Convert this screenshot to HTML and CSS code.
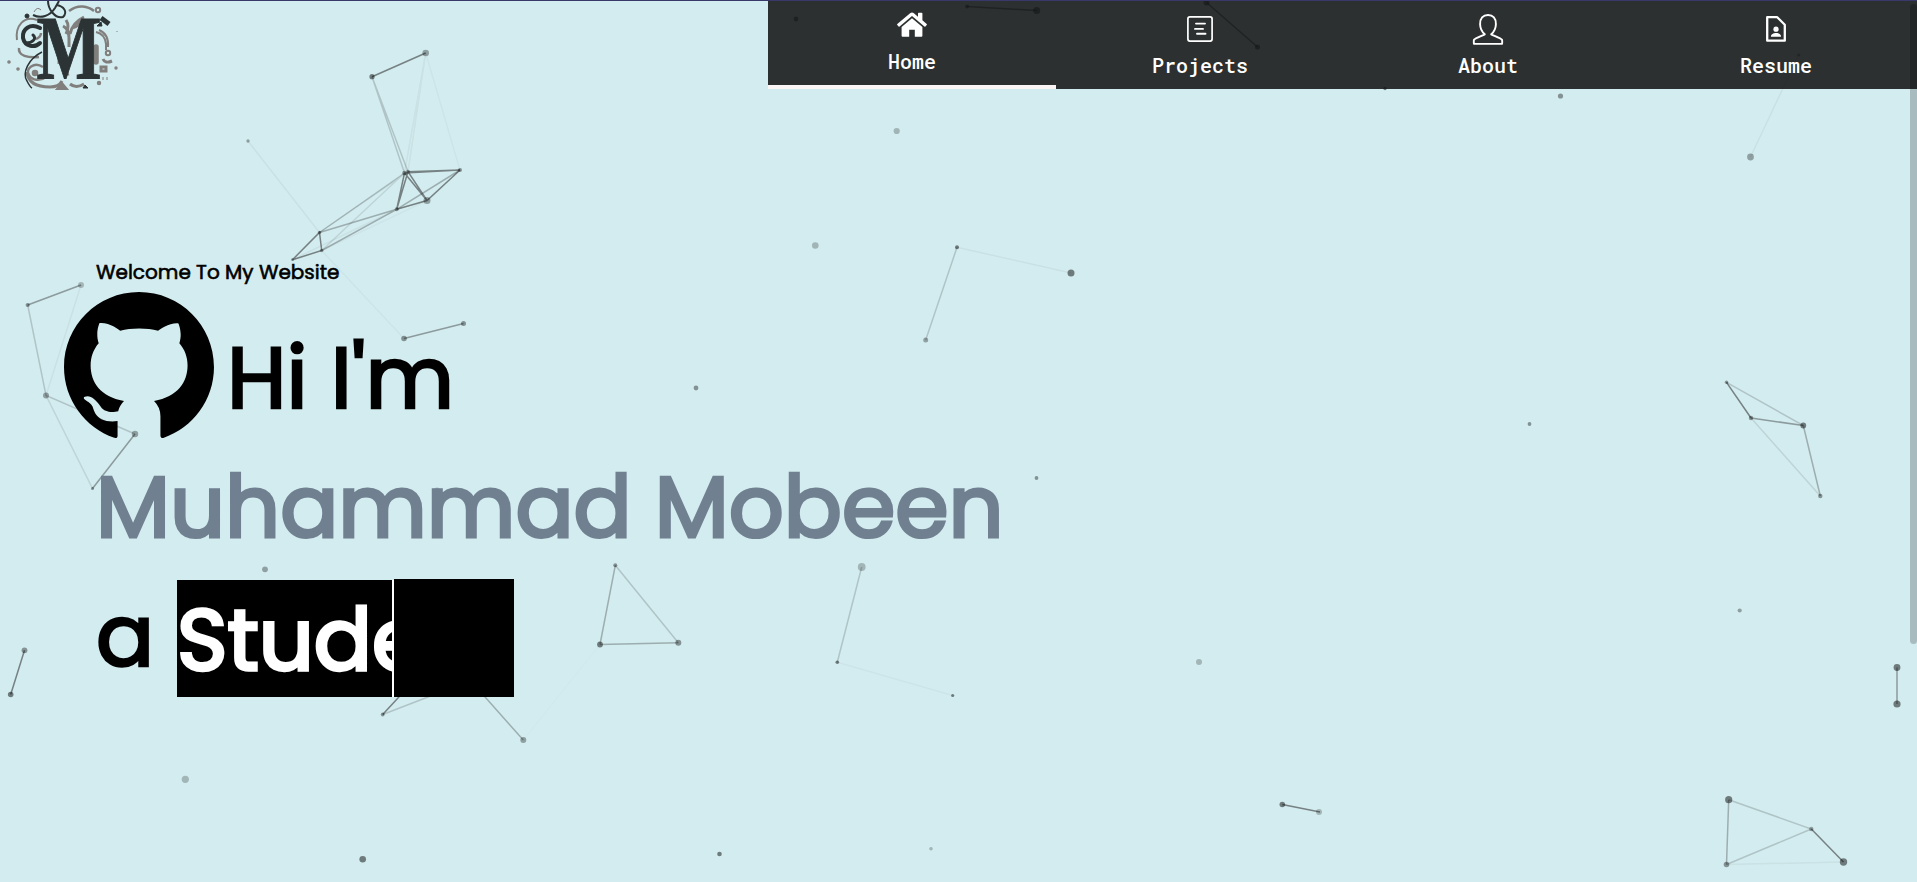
FILE: index.html
```html
<!DOCTYPE html>
<html lang="en">
<head>
<meta charset="utf-8">
<title>Muhammad Mobeen</title>
<link rel="stylesheet" href="styles.css">
</head>
<body>
<svg class="particles" viewBox="0 0 1917 882" aria-hidden="true">
  <g class="links">
    <path opacity=".55" d="M372 76.7L425.7 53M404.5 173L460 170M408 171.7L460 170M404.5 173L427 200.5M408 171.7L427 200.5M404.5 173L396.7 209.3M408 171.7L396.7 209.3M396.7 209.3L427 200.5L460 170M319.5 232.5L321.7 250.5L292.5 259.7ZM1726.5 382.3L1751 418M1811.3 829L1843.5 862M1282.3 804.5L1320 812M24.5 650.3L10.7 694.5M382.7 714.5L410 685M967 6.5L1036.7 10.5M1206.5 2.5L1257.5 47"/>
    <path opacity=".42" d="M1751 418L1803.3 425.5M1897 667.5V704M27.7 305L81 285M404 338.5L463.5 323.5M135 434L92.5 488.5"/>
    <path opacity=".32" d="M1803.3 425.5L1820.3 496M1728.7 799.7L1726.5 864.5M600 644.5L615.3 565.3M600 644.5L678.3 642.7M523.3 740L470 680M396.7 209.3L460 170M319.5 232.5L396.7 209.3L321.7 250.5"/>
    <path opacity=".2" d="M1726.5 382.3L1803.3 425.5M1728.7 799.7L1811.3 829L1726.5 864.5M615.3 565.3L678.3 642.7M861.7 567L837.3 662.3M957 247.3L925.7 340M27.7 305L46 395.5L135 434M372 76.7L404.5 173M372 76.7L408 171.7M319.5 232.5L404.5 173M382.7 714.5L441 692"/>
    <path opacity=".12" d="M1751 418L1820.3 496M46 395.5L92.5 488.5M319.5 232.5L408 171.7M321.7 250.5L404.5 173"/>
    <path opacity=".05" d="M425.7 53L404.5 173M425.7 53L408 171.7M248 141L319.5 232.5M957 247.3L1071 273M81 285L46 395.5M1750.5 157L1798.7 55M292.5 259.7L396.7 209.3M1726.5 864.5L1843.5 862"/>
    <path opacity=".03" d="M837.3 662.3L952.7 695.5M425.7 53L460 170M321.7 250.5L404 338.5M321.7 250.5L427 200.5"/>
    <path opacity=".012" d="M523.3 740L600 644.5"/>
  </g>
  <g opacity=".48">
    <circle cx="372" cy="76.7" r="2.6"/><circle cx="796" cy="19" r="2.4"/><circle cx="967" cy="6.5" r="2"/><circle cx="1036.7" cy="10.5" r="3.5"/><circle cx="1206.5" cy="2.5" r="3"/><circle cx="1257.5" cy="47" r="2.6"/><circle cx="1385" cy="88.5" r="1.7"/>
    <circle cx="957" cy="247.3" r="2"/><circle cx="1071" cy="273" r="3.5"/><circle cx="1803.3" cy="425.5" r="2.9"/><circle cx="1897" cy="667.5" r="3.4"/><circle cx="1897" cy="704" r="3.6"/><circle cx="1728.7" cy="799.7" r="3.6"/><circle cx="1843.5" cy="862" r="3.7"/>
    <circle cx="362.7" cy="859.3" r="3.3"/><circle cx="719.5" cy="854" r="2.3"/><circle cx="10.7" cy="694.5" r="2.8"/><circle cx="600" cy="644.5" r="2.9"/><circle cx="952.7" cy="695.5" r="1.6"/><circle cx="837.3" cy="662.3" r="1.8"/><circle cx="1282.3" cy="804.5" r="2.8"/>
  </g>
  <g opacity=".38">
    <circle cx="404" cy="338.5" r="2.8"/><circle cx="463.5" cy="323.5" r="2.5"/><circle cx="27.7" cy="305" r="2.1"/><circle cx="678.3" cy="642.7" r="3"/><circle cx="615.3" cy="565.3" r="2"/><circle cx="1036.5" cy="478" r="1.9"/><circle cx="1529.500" cy="424" r="1.9"/><circle cx="1560.5" cy="96" r="2.6"/>
    <circle cx="404.5" cy="173" r="2.3"/><circle cx="408" cy="171.7" r="2"/><circle cx="460" cy="170" r="2"/><circle cx="396.7" cy="209.3" r="2"/><circle cx="319.5" cy="232.5" r="1.7"/><circle cx="1751" cy="418" r="2.2"/><circle cx="1726.5" cy="382.3" r="1.7"/><circle cx="1820.3" cy="496" r="2.2"/><circle cx="1726.5" cy="864.5" r="2.8"/>
    <circle cx="24.5" cy="650.3" r="2.9"/><circle cx="696" cy="388" r="2.4"/><circle cx="382.7" cy="714.5" r="1.9"/><circle cx="92.5" cy="488.5" r="1.5"/><circle cx="292.5" cy="259.7" r="1.4"/>
  </g>
  <g opacity=".32">
    <circle cx="425.7" cy="53" r="3.3"/><circle cx="427" cy="200.5" r="3.5"/><circle cx="248" cy="141" r="1.7"/><circle cx="321.7" cy="250.5" r="1.8"/><circle cx="46" cy="395.5" r="3"/><circle cx="135" cy="434" r="3.2"/><circle cx="265" cy="569.3" r="2.9"/><circle cx="523.3" cy="740" r="3"/><circle cx="925.7" cy="340" r="2.5"/><circle cx="1750.5" cy="157" r="3.4"/><circle cx="1739.7" cy="610.5" r="2.1"/><circle cx="1811.3" cy="829" r="2.2"/><circle cx="1798.7" cy="55" r="1.6"/>
  </g>
  <g opacity=".23">
    <circle cx="81" cy="285" r="3"/><circle cx="437" cy="490.500" r="3"/><circle cx="861.7" cy="567" r="3.9"/><circle cx="896.7" cy="131" r="3.1"/><circle cx="815.3" cy="245.5" r="3.3"/><circle cx="185.3" cy="779.3" r="3.6"/><circle cx="931" cy="848.7" r="1.8"/><circle cx="1199" cy="662" r="3"/><circle cx="1319" cy="812" r="3"/>
  </g>
</svg>

<header class="header">
  <a class="logo" href="#">
    <svg viewBox="0 0 130 88" width="130" height="88">
      <g class="grey">
        <path d="M37 19C24 14 15 25 17 39"/><path stroke-width="2.500" d="M19 47C18 55 28 57 39 56"/><path stroke-width="3" d="M27 71C28 82 38 86 50 86c6 0 10-2 12-6"/><path stroke-width="2.500" d="M43 66C34 60 25 68 29 74c3 6 12 6 17 2"/>
        <path stroke-width="2.500" d="M69 10C78 3 88 5 94 10"/><path d="M66 33q4-8 0-14M70 33q2-11 14-17M63 25q6 3 6 12M72 27q8-2 8-7" stroke-width="3"/>
        <path d="M59 33v30M61 63q4 11 8 10M69 37v9" stroke-width="3"/><circle cx="98" cy="9" r="2.2"/><circle cx="35" cy="72" r="2.300" fill="#817f7d"/>
        <path d="M96 31q9 2 10 12v6M99 29q10 4 9 17"/><circle cx="108" cy="52" r="2.2"/><path stroke-width="5.500" stroke-linecap="round" d="M96 46v15"/>
        <path stroke-width="3" d="M103 58q2 5 9 2M101 70v-4h5v4z"/><path d="M57 88l5-6 5 6z" fill="#817f7d"/><path stroke-width="3" d="M70 83q6 5 14 0"/>
        <circle cx="9" cy="61" r=".8"/><circle cx="18" cy="68" r=".8"/><circle cx="116" cy="67" r=".7"/><circle cx="99" cy="82" r="1.200"/><path stroke-width="1" d="M34 11q3-6 7-2M103 76v3M107 76v3M117 30v1"/>
        <path stroke-width="2.500" d="M36 38q5-2 5-6"/>
      </g>
      <g class="dark">
        <path stroke-width="4" stroke-linecap="round" d="M40 27C30 22 22 28 23 37C25 46 35 47 40 42"/><path stroke-width="3" stroke-linecap="round" d="M26 42C33 42 37 37 33 34"/>
        <path stroke-width="2" d="M33 14C41 18 50 15 55 7L59 0M48 0C48 8 55 18 63 16C68 11 64 5 56 4"/>
        <path stroke-width="1.500" d="M42 51C28 58 22 72 27 80c2 4 3 6 5 7"/><circle cx="27" cy="15" r="2" fill="#2c3335"/><path fill="#2c3335" d="M97 25l4-4 1 4zM83 87l2-3 3 3z"/><path stroke-width="5" d="M101 17l8 6"/>
      </g>
      <text class="logo-letter" x="36.500" y="78" textLength="65" lengthAdjust="spacingAndGlyphs">M</text>
    </svg>
  </a>
  <nav class="nav">
    <a class="tab active" href="#">
      <svg width="30" height="28" viewBox="0 0 30 28"><path fill="#fff" d="M15 7.200L4.600 16v8.800a1 1 0 0 0 1 1h6.600v-7h5.600v7h6.600a1 1 0 0 0 1-1V16z"/><path fill="#fff" d="M29.700 13L25.400 9.300V2.500a.8.8 0 0 0-.8-.8h-2.800a.8.8 0 0 0-.8.8v3.200L16.900 2.200a2.900 2.900 0 0 0-3.800 0L.3 13a.8.8 0 0 0 0 1.100l1.300 1.400a.8.8 0 0 0 1 0L15 5.100l12.400 10.400a.8.8 0 0 0 1 0l1.300-1.400a.8.8 0 0 0 0-1.100z"/></svg>
      <span>Home</span>
    </a>
    <a class="tab" href="#">
      <svg width="30" height="32" viewBox="0 0 30 32" fill="none" stroke="#fff" stroke-linecap="round"><rect x="2.900" y="3.900" width="24.200" height="24.200" rx="2" stroke-width="1.700"/><path stroke-width="1.900" d="M11 10.600h9M10 15.900h8M12 20.800h8.500"/></svg>
      <span>Projects</span>
    </a>
    <a class="tab" href="#">
      <svg width="32" height="32" viewBox="0 0 32 32" fill="none" stroke="#fff" stroke-width="1.900" stroke-linejoin="round"><path d="M16 2c5 0 8.100 3.300 7.900 9.200-.1 4.500-1.500 7.300-4.700 10.100 2.600 1.400 9.600 3.900 10.700 5.300.5.700.3 3.900.1 4.300H2c-.2-.4-.4-3.600.1-4.300 1.100-1.400 8.100-3.900 10.700-5.300-3.200-2.800-4.600-5.600-4.700-10.100C7.900 5.300 11 2 16 2z"/></svg>
      <span>About</span>
    </a>
    <a class="tab" href="#">
      <svg width="30" height="32" viewBox="0 0 30 32"><path fill="none" stroke="#fff" stroke-width="2.300" stroke-linejoin="round" d="M6.200 4.200h10l7.600 7.500v16H6.200z"/><circle cx="15" cy="16.200" r="2.600" fill="#fff"/><path fill="#fff" d="M9.900 23.700c0-5 10.200-5 10.200 0z"/></svg>
      <span>Resume</span>
    </a>
  </nav>
</header>

<main class="hero">
  <p class="welcome">Welcome To My Website</p>
  <h1 class="headline">
    <span class="line greeting">
      <svg class="github" viewBox="64 76.300 895.200 872"><path d="M511.600 76.300C264.300 76.200 64 276.400 64 523.500 64 718.900 189.300 885 363.800 946c23.500 5.900 19.900-10.800 19.900-22.200v-77.500c-135.700 15.900-141.200-73.900-150.300-88.900C215 726 171.500 718 184.500 703c30.900-15.900 62.400 4 98.900 57.900 26.400 39.100 77.900 32.500 104 26 5.700-23.500 17.900-44.500 34.700-60.800-140.600-25.200-199.200-111-199.200-213 0-49.500 16.300-95 48.300-131.700-20.400-60.500 1.900-112.300 4.900-120 58.100-5.200 118.500 41.600 123.200 45.300 33-8.900 70.700-13.600 112.900-13.600 42.400 0 80.200 4.900 113.500 13.900 11.300-8.600 67.300-48.800 121.300-43.900 2.900 7.700 24.700 58.300 5.500 118 32.400 36.800 48.900 82.700 48.900 132.300 0 102.200-59 188.100-200 212.900a127.500 127.500 0 0 1 38.100 91v112.500c.8 9 0 17.900 15 17.900 177.100-59.700 304.600-227 304.600-424.100 0-247.200-200.400-447.300-447.500-447.300z"/></svg>
      Hi I'm
    </span>
    <span class="line name">Muhammad Mobeen</span>
    <span class="line role"><span class="article">a</span><span class="typed">Stude</span><span class="cover"></span></span>
  </h1>
</main>
<div class="scrollbar"></div>
</body>
</html>
```

FILE: styles.css
```css
* { box-sizing: border-box; }
body {
  margin: 0;
  height: 882px;
  overflow: hidden;
  background: #d3ecef;
  color: #000;
  font-family: Poppins, Inter, sans-serif;
}
.particles { position: absolute; inset: 0; width: 1917px; height: 882px; z-index: -1; }
.links path { fill: none; stroke: #2a2a2a; stroke-width: 1.500; }

.header {
  display: flex;
  justify-content: space-between;
  height: 89px;
  border-top: 1px solid #38386b;
}
.logo { display: block; height: 88px; }
.logo svg { display: block; overflow: visible; }
.grey { fill: none; stroke: #817f7d; stroke-width: 2; }
.dark { fill: none; stroke: #2c3335; }
.logo-letter { font: bold 90px "Liberation Serif", serif; fill: #2c3335; stroke: #2c3335; stroke-width: 1; }

.nav { display: flex; width: 1149px; overflow: hidden; background: rgba(18, 20, 20, .87); }
.tab {
  flex: 0 0 288px;
  display: flex;
  flex-direction: column;
  align-items: center;
  padding-top: 12px;
  color: #fff;
  font: 500 20px/24px "Roboto Mono", "DejaVu Sans Mono", monospace;
  text-decoration: none;
}
.tab span { margin-top: 8px; }
.tab.active { padding-top: 10px; border-bottom: 4px solid #fcf5f5; }
.tab.active span { margin-top: 10px; }

.hero { padding: 168px 0 0 96px; }
.welcome {
  margin: 0 0 26.500px;
  font-size: 20px;
  line-height: 30px;
  font-weight: 400;
  -webkit-text-stroke: .6px #000;
}
.headline {
  margin: 0;
  font-size: 86px;
  line-height: 129px;
  font-weight: 400;
  -webkit-text-stroke: 2.700px currentColor;
}
.line { display: flex; height: 129px; white-space: nowrap; }
.greeting { margin-left: -32px; }
.github { width: 150px; height: 146.300px; margin: -22px 13px 0 0; flex: none; }
.name { color: #708090; -webkit-text-stroke-width: 3.200px; }
.article { width: 81px; }
.typed {
  width: 217px;
  height: 117px;
  margin-top: 8.500px;
  overflow: hidden;
  background: #000;
  border-right: 2px solid #fff;
  color: #fff;
  line-height: 120px;
  -webkit-text-stroke: 3.500px #fff;
}
.cover { width: 120px; height: 118px; margin-top: 7.500px; background: #000; }
.scrollbar {
  position: absolute;
  top: 4px;
  right: 0;
  width: 7px;
  height: 640px;
  border-radius: 4px;
  background: rgba(0, 0, 0, .2);
}
```
